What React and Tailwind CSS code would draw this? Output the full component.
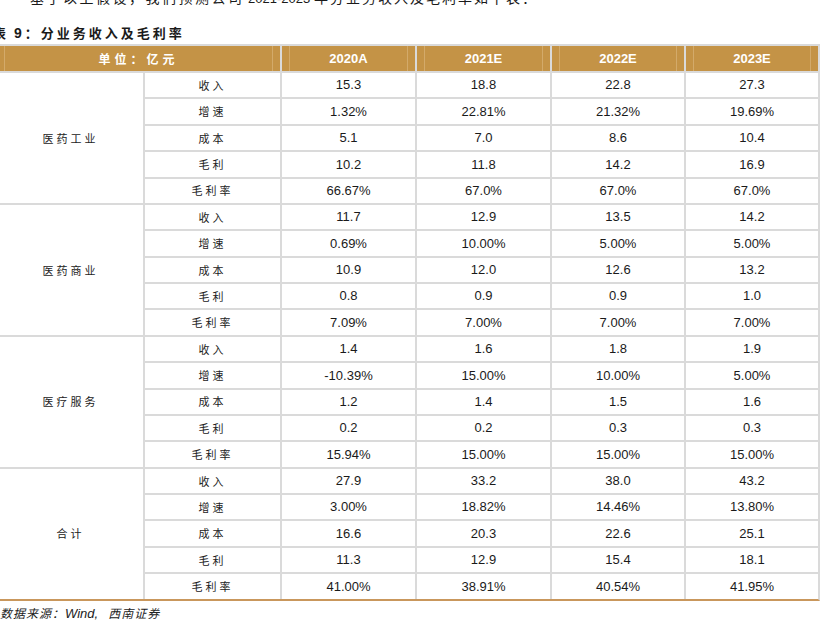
import React from "react";

const groups = [
  {
    name: "医药工业",
    rows: [
      ["收入", "15.3", "18.8", "22.8", "27.3"],
      ["增速", "1.32%", "22.81%", "21.32%", "19.69%"],
      ["成本", "5.1", "7.0", "8.6", "10.4"],
      ["毛利", "10.2", "11.8", "14.2", "16.9"],
      ["毛利率", "66.67%", "67.0%", "67.0%", "67.0%"],
    ],
  },
  {
    name: "医药商业",
    rows: [
      ["收入", "11.7", "12.9", "13.5", "14.2"],
      ["增速", "0.69%", "10.00%", "5.00%", "5.00%"],
      ["成本", "10.9", "12.0", "12.6", "13.2"],
      ["毛利", "0.8", "0.9", "0.9", "1.0"],
      ["毛利率", "7.09%", "7.00%", "7.00%", "7.00%"],
    ],
  },
  {
    name: "医疗服务",
    rows: [
      ["收入", "1.4", "1.6", "1.8", "1.9"],
      ["增速", "-10.39%", "15.00%", "10.00%", "5.00%"],
      ["成本", "1.2", "1.4", "1.5", "1.6"],
      ["毛利", "0.2", "0.2", "0.3", "0.3"],
      ["毛利率", "15.94%", "15.00%", "15.00%", "15.00%"],
    ],
  },
  {
    name: "合计",
    rows: [
      ["收入", "27.9", "33.2", "38.0", "43.2"],
      ["增速", "3.00%", "18.82%", "14.46%", "13.80%"],
      ["成本", "16.6", "20.3", "22.6", "25.1"],
      ["毛利", "11.3", "12.9", "15.4", "18.1"],
      ["毛利率", "41.00%", "38.91%", "40.54%", "41.95%"],
    ],
  },
];

const years = ["2020A", "2021E", "2022E", "2023E"];

export default function App() {
  return (
    <div className="w-[827px] h-[624px] overflow-hidden bg-white text-[#1a1a1a] font-['Noto_Sans_CJK_SC','Noto_Sans',sans-serif]">
      <div className="mt-[-10px] h-[14px] leading-[14px] pl-[30px] text-[14px] whitespace-nowrap">
        <span className="tracking-[2.5px]">基于以上假设，我们预测公司</span>
        <span className="text-[13px] font-['Liberation_Sans',Arial,sans-serif]"> 2021-2023 </span>
        <span className="tracking-[2px]">年分业务收入及毛利率如下表：</span>
      </div>
      <div className="mt-[22px] h-[14px] leading-[14px] ml-[-7px] text-[13px] font-bold whitespace-nowrap tracking-[3px]">
        <span className="mr-[5px]">表</span>
        <span className="font-['Liberation_Sans',Arial,sans-serif] text-[14px]">9</span>
        <span>：分业务收入及毛利率</span>
      </div>
      <div className="mt-[4px] ml-[-4px] w-[824px] border-2 border-[#dadada] border-b-[#c9975c] bg-[#dadada]">
        <div className="grid grid-cols-[145px_135px_133px_133px_132px_132px] grid-rows-[25px_repeat(20,24.38px)] gap-[2px]">
          <div className="col-span-2 bg-[#c49346] pl-[6px] pr-[7px]">
            <div className="h-full border-x border-[#d3aa6a] flex items-center justify-center text-white text-[12px] font-bold tracking-[4px]">
              单位：亿元
            </div>
          </div>
          {years.map((y) => (
            <div key={y} className="bg-[#c49346] px-[7px]">
              <div className="h-full border-x border-[#d3aa6a] flex items-center justify-center text-white text-[13px] font-bold font-['Liberation_Sans',Arial,sans-serif]">
                {y}
              </div>
            </div>
          ))}
          {groups.map((g) => (
            <React.Fragment key={g.name}>
              <div className="row-span-5 bg-white flex items-center justify-center text-[11px] tracking-[3px] text-[#222]">
                {g.name}
              </div>
              {g.rows.map((r, i) => (
                <React.Fragment key={i}>
                  <div className="bg-white flex items-center justify-center text-[11px] tracking-[3px] text-[#222]">
                    {r[0]}
                  </div>
                  {r.slice(1).map((v, j) => (
                    <div key={j} className="bg-white flex items-center justify-center text-[13px] font-['Liberation_Sans',Arial,sans-serif]">
                      {v}
                    </div>
                  ))}
                </React.Fragment>
              ))}
            </React.Fragment>
          ))}
        </div>
      </div>
      <div className="mt-[5px] h-[14px] leading-[14px] text-[12px] italic text-[#222] whitespace-nowrap">
        <span className="tracking-[1px]">数据来源：</span>
        <span className="font-['Liberation_Sans',Arial,sans-serif] text-[13px]">Wind,</span>
        <span className="pl-[10px] tracking-[1px]">西南证券</span>
      </div>
    </div>
  );
}
